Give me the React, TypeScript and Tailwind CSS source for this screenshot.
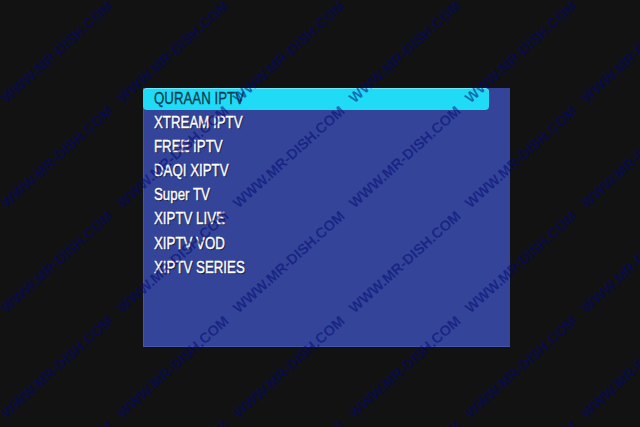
import React from "react"

const items = [
  "QURAAN IPTV",
  "XTREAM IPTV",
  "FREE IPTV",
  "DAQI XIPTV",
  "Super TV",
  "XIPTV LIVE",
  "XIPTV VOD",
  "XIPTV SERIES",
]

// watermark grid: centres every 116px across, 105px down
const marks: { x: number; y: number }[] = []
for (let j = 0; j < 5; j++) {
  for (let i = -1; i < 6; i++) {
    marks.push({ x: 57 + 116 * i, y: 52 + 105 * j })
  }
}

function Watermark() {
  return (
    <div className="pointer-events-none absolute inset-0 overflow-hidden">
      {marks.map((m) => (
        <span
          key={`${m.x}-${m.y}`}
          className="absolute whitespace-nowrap text-[14.5px] font-bold leading-none text-[rgba(0,6,115,0.52)]"
          style={{ left: m.x, top: m.y, transform: "translate(-50%, -50%) rotate(-42deg)" }}
        >
          WWW.MR-DISH.COM
        </span>
      ))}
    </div>
  )
}

export default function App() {
  const selected = 0

  return (
    <div
      className="relative h-[427px] w-[640px] overflow-hidden bg-[#121212] pl-[143px] pt-[88px]"
      style={{ fontFamily: '"Liberation Sans", Arial, sans-serif' }}
    >
      {/* Menu panel */}
      <div className="flex h-[259px] w-[367px] flex-col gap-[2.1px] border-b border-l border-[#4656a8] bg-[#344599]">
        {items.map((label, idx) => {
          const active = idx === selected
          return (
            <div
              key={label}
              className={
                active
                  ? "-ml-px flex h-[22px] w-[346px] shrink-0 items-center rounded-[4px] bg-[#1fdbf6] pl-[11px] shadow-[inset_0_1px_0_rgba(255,255,255,0.35)]"
                  : "flex h-[22px] shrink-0 items-center pl-[10px]"
              }
            >
              <span
                className={
                  active
                    ? "origin-left scale-x-[0.83] text-[16px] leading-[22px] whitespace-nowrap text-[#0c3b52] [-webkit-text-stroke:0.3px_#0c3b52]"
                    : "origin-left scale-x-[0.83] text-[16px] leading-[22px] whitespace-nowrap text-white [-webkit-text-stroke:0.35px_#fff] [text-shadow:1px_1px_1px_rgba(0,0,20,0.7)]"
                }
              >
                {label}
              </span>
            </div>
          )
        })}
      </div>

      <Watermark />
    </div>
  )
}
